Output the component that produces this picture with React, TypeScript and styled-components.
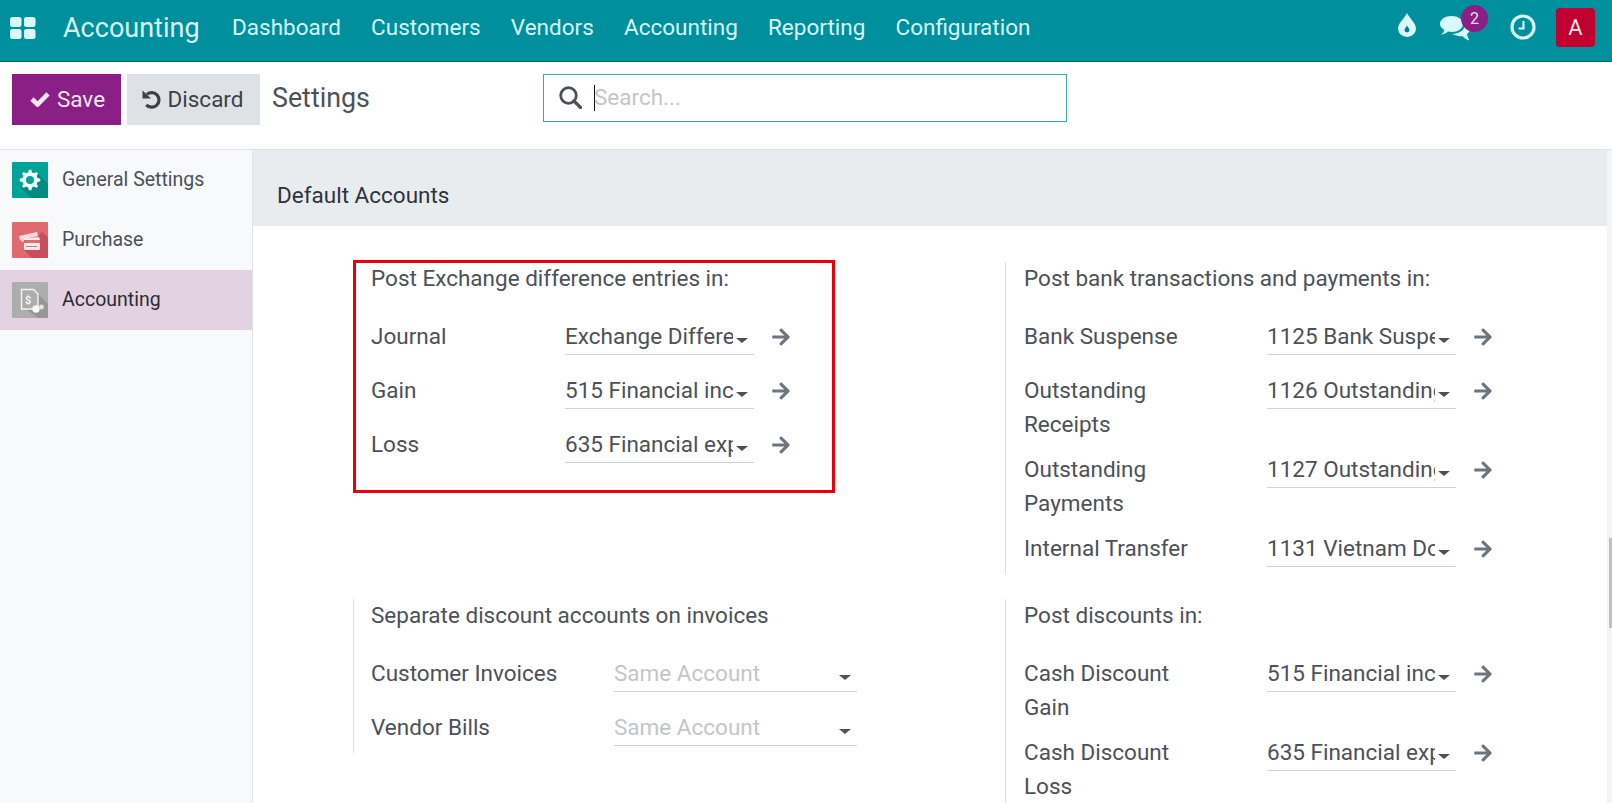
import styled, { createGlobalStyle } from "styled-components";
import { FaArrowRight } from "react-icons/fa";

const GlobalStyle = createGlobalStyle`
  html, body {
    margin: 0;
    height: 100%;
    overflow: hidden;
    background: #fff;
  }
  * {
    box-sizing: border-box;
  }
  body {
    font-family: Roboto, "Liberation Sans", sans-serif;
    color: #4c5159;
  }
`;

const navItems = ["Dashboard", "Customers", "Vendors", "Accounting", "Reporting", "Configuration"];

type T_Field = {
  label: string;
  value: string;
  empty?: boolean;
  link?: boolean;
};

const exchangeFields: T_Field[] = [
  { label: "Journal", value: "Exchange Difference", link: true },
  { label: "Gain", value: "515 Financial income", link: true },
  { label: "Loss", value: "635 Financial expense", link: true },
];

const bankFields: T_Field[] = [
  { label: "Bank Suspense", value: "1125 Bank Suspense", link: true },
  { label: "Outstanding Receipts", value: "1126 Outstanding Receipts", link: true },
  { label: "Outstanding Payments", value: "1127 Outstanding Payments", link: true },
  { label: "Internal Transfer", value: "1131 Vietnam Dong", link: true },
];

const separateFields: T_Field[] = [
  { label: "Customer Invoices", value: "Same Account", empty: true },
  { label: "Vendor Bills", value: "Same Account", empty: true },
];

const discountFields: T_Field[] = [
  { label: "Cash Discount Gain", value: "515 Financial income", link: true },
  { label: "Cash Discount Loss", value: "635 Financial expense", link: true },
];

function AppsIcon() {
  return (
    <svg width="26" height="22" viewBox="0 0 26 22" fill="#d9f8f8">
      <rect x="0" y="0" width="11.5" height="10" rx="2.5" />
      <rect x="14" y="0" width="11.5" height="10" rx="2.5" />
      <rect x="0" y="12" width="11.5" height="10" rx="2.5" />
      <rect x="14" y="12" width="11.5" height="10" rx="2.5" />
    </svg>
  );
}

function DropIcon() {
  return (
    <svg width="18" height="24" viewBox="0 0 18 24">
      <path d="M9 0C10.5 4 18 10 18 15.5A9 8.5 0 0 1 0 15.5C0 10 7.5 4 9 0Z" fill="#d9f8f8" />
      <path d="M9 12.5C9.6 14 11.5 15.5 11.5 17A2.5 2.5 0 0 1 6.5 17C6.5 15.5 8.4 14 9 12.5Z" fill="#00808c" />
    </svg>
  );
}

function ChatIcon() {
  return (
    <svg width="30" height="25" viewBox="0 0 30 25" fill="#d9f8f8">
      <path d="M11.5 0C18 0 23 3.4 23 8C23 12.600 18 16 11.500 16C10.300 16 9 15.900 8 15.600C6.500 17.300 4 18.500 1.500 18.500C3 17 4 15.500 4.200 13.800C1.600 12.400 0 10.300 0 8C0 3.400 5 0 11.500 0Z" />
      <path d="M24.500 6.500C27.800 7.800 30 10.200 30 13C30 15 28.900 16.800 27 18C27.200 19.800 28 21.500 29.500 24.500C26.500 23.500 24 22 22.500 20C21 20.300 19.500 20.300 18 20C15.800 19.600 13.800 18.800 12.500 17.800C19.500 17.800 25 13.600 25 8.200C25 7.600 24.800 7 24.500 6.500Z" />
    </svg>
  );
}

function ClockIcon() {
  return (
    <svg width="26" height="26" viewBox="0 0 26 26" fill="none" stroke="#d9f8f8">
      <circle cx="13" cy="13" r="11" strokeWidth="3.200" />
      <path d="M13.500 7V14.500H8.500" strokeWidth="2.200" />
    </svg>
  );
}

function SearchIcon() {
  return (
    <svg width="23" height="23" viewBox="0 0 23 23" fill="none" stroke="#4c5159">
      <circle cx="9.500" cy="9.500" r="7.800" strokeWidth="2.800" />
      <path d="M15 15L21.500 21.500" strokeWidth="3.200" strokeLinecap="round" />
    </svg>
  );
}

function CheckIcon() {
  return (
    <svg width="20" height="16" viewBox="0 0 20 16" fill="none" stroke="#f4e6f3">
      <path d="M2 8L7.500 13.500L18 2.800" strokeWidth="4.600" />
    </svg>
  );
}

function UndoIcon() {
  return (
    <svg width="19" height="20" viewBox="0 0 19 20">
      <path d="M5 5.300A7.300 7.300 0 1 1 4.300 15.800" fill="none" stroke="#3c4149" strokeWidth="3.200" />
      <path d="M0.500 1.500L9 9.500H0.500Z" fill="#3c4149" />
    </svg>
  );
}

function SettingsAppIcon() {
  return (
    <svg width="36" height="36" viewBox="0 0 36 36">
      <path d="M9 26L24 10L36 22V36H19Z" fill="#018a80" />
      <path
        d="M18 9.500L20.500 9.500L21.200 12.200L23.200 13.100L25.600 11.700L27.300 13.500L25.900 15.900L26.800 17.900L29.500 18.500L29.500 21L26.800 21.700L25.900 23.700L27.300 26L25.600 27.800L23.200 26.400L21.200 27.300L20.500 30L18 30L17.300 27.300L15.300 26.400L12.900 27.800L11.200 26L12.600 23.700L11.700 21.700L9 21L9 18.500L11.700 17.900L12.600 15.900L11.200 13.500L12.900 11.700L15.300 13.100L17.300 12.200Z"
        fill="#f2fbfa"
        transform="translate(-1.200 -1.800)"
      />
      <circle cx="18" cy="18" r="4" fill="#00a398" />
    </svg>
  );
}

function PurchaseAppIcon() {
  return (
    <svg width="36" height="36" viewBox="0 0 36 36">
      <path d="M11 27L30 10L36 15V36H20Z" fill="#c65059" />
      <path d="M7 14L25 10L26 14L8 18Z" fill="#f6dcdc" />
      <path d="M8 17.500L27 14.500L27.500 16.500L10 20Z" fill="#f6dcdc" opacity="0.800" />
      <rect x="12" y="16" width="16" height="12" rx="1.500" fill="#f8e8e8" />
      <rect x="12" y="18" width="16" height="3" fill="#df6a70" />
      <rect x="14" y="24" width="11" height="1" fill="#d86a70" />
    </svg>
  );
}

function AccountingAppIcon() {
  return (
    <svg width="36" height="36" viewBox="0 0 36 36">
      <path d="M22 8L36 22V36H26L15 28Z" fill="#969696" />
      <path d="M9.500 7.500H21.500L26 12V27H9.500Z" fill="#adadad" stroke="#f4f4f4" strokeWidth="1.400" />
      <text x="13" y="22" fontSize="11" fontFamily="Roboto" fontWeight="700" fill="#f4f4f4">$</text>
      <circle cx="24" cy="27" r="3.700" fill="#f8f8f8" />
      <circle cx="29.500" cy="25" r="2.400" fill="#e4e4e4" />
    </svg>
  );
}

function FieldRow({ label, value, empty, link, labelWidth, selectWidth }: T_Field & { labelWidth: number; selectWidth: number }) {
  return (
    <Row>
      <FieldLabel $width={labelWidth}>{label}</FieldLabel>
      <Select $width={selectWidth}>
        <SelectText $empty={empty}>{value}</SelectText>
        <Caret />
      </Select>
      {link && (
        <LinkArrow>
          <FaArrowRight />
        </LinkArrow>
      )}
    </Row>
  );
}

export default function App() {
  return (
    <Page>
      <GlobalStyle />
      <NavBar>
        <AppsButton>
          <AppsIcon />
        </AppsButton>
        <Brand>Accounting</Brand>
        {navItems.map((item) => (
          <NavItem key={item}>{item}</NavItem>
        ))}
        <Systray>
          <DropSlot>
            <DropIcon />
          </DropSlot>
          <ChatSlot>
            <ChatIcon />
            <Badge>2</Badge>
          </ChatSlot>
          <ClockSlot>
            <ClockIcon />
          </ClockSlot>
          <Avatar>A</Avatar>
        </Systray>
      </NavBar>

      <ControlPanel>
        <SaveButton>
          <CheckIcon />
          Save
        </SaveButton>
        <DiscardButton>
          <UndoIcon />
          Discard
        </DiscardButton>
        <PanelTitle>Settings</PanelTitle>
        <SearchBox>
          <SearchIcon />
          <Cursor />
          <SearchHint>Search...</SearchHint>
        </SearchBox>
      </ControlPanel>

      <Body>
        <Sidebar>
          <SideItem>
            <AppTile $color="#00a398">
              <SettingsAppIcon />
            </AppTile>
            <SideLabel>General Settings</SideLabel>
          </SideItem>
          <SideItem>
            <AppTile $color="#df6a70">
              <PurchaseAppIcon />
            </AppTile>
            <SideLabel>Purchase</SideLabel>
          </SideItem>
          <SideItem $active>
            <AppTile $color="#adadad">
              <AccountingAppIcon />
            </AppTile>
            <SideLabel>Accounting</SideLabel>
          </SideItem>
        </Sidebar>

        <Content>
          <SectionHeader>Default Accounts</SectionHeader>
          <SettingsGrid>
            <Block $plain $inset={17}>
              <Highlight />
              <BlockTitle>Post Exchange difference entries in:</BlockTitle>
              <Rows>
                {exchangeFields.map((field) => (
                  <FieldRow key={field.label} {...field} labelWidth={194} selectWidth={189} />
                ))}
              </Rows>
            </Block>
            <Block $inset={18}>
              <BlockTitle>Post bank transactions and payments in:</BlockTitle>
              <Rows>
                {bankFields.map((field) => (
                  <FieldRow key={field.label} {...field} labelWidth={243} selectWidth={189} />
                ))}
              </Rows>
            </Block>
            <Block $inset={17}>
              <BlockTitle>Separate discount accounts on invoices</BlockTitle>
              <Rows>
                {separateFields.map((field) => (
                  <FieldRow key={field.label} {...field} labelWidth={243} selectWidth={243} />
                ))}
              </Rows>
            </Block>
            <Block $inset={18}>
              <BlockTitle>Post discounts in:</BlockTitle>
              <Rows>
                {discountFields.map((field) => (
                  <FieldRow key={field.label} {...field} labelWidth={243} selectWidth={189} />
                ))}
              </Rows>
            </Block>
          </SettingsGrid>
        </Content>

        <ScrollTrack>
          <ScrollThumb />
        </ScrollTrack>
      </Body>
    </Page>
  );
}

const Page = styled.div`
  width: 1612px;
  height: 803px;
  display: flex;
  flex-flow: column nowrap;
  overflow: hidden;
`;

const NavBar = styled.header`
  height: 62px;
  flex: none;
  display: flex;
  align-items: center;
  padding-bottom: 6px;
  background-color: #008f9c;
  border-bottom: 1px solid #00626b;
  color: #d9f8f8;
`;

const AppsButton = styled.div`
  width: 63px;
  padding-left: 10px;
  display: flex;
  align-items: center;
`;

const Brand = styled.div`
  width: 154px;
  font-size: 27px;
`;

const NavItem = styled.div`
  padding: 0 15.1px 2px;
  font-size: 22.5px;
`;

const Systray = styled.div`
  margin-left: auto;
  display: flex;
  align-items: center;
`;

const DropSlot = styled.div`
  margin-right: 24px;
  margin-bottom: 6px;
  display: flex;
`;

const ChatSlot = styled.div`
  position: relative;
  margin-right: 40px;
  margin-top: 2px;
  display: flex;
`;

const Badge = styled.span`
  position: absolute;
  top: -11px;
  left: 21px;
  width: 27px;
  height: 27px;
  border-radius: 50%;
  display: flex;
  align-items: center;
  justify-content: center;
  background-color: #8a1f85;
  color: #ecdcec;
  font-size: 16px;
`;

const ClockSlot = styled.div`
  margin-right: 20px;
  margin-bottom: 2px;
  display: flex;
`;

const Avatar = styled.div`
  width: 39px;
  height: 39px;
  margin-right: 17px;
  border-radius: 4px;
  display: flex;
  align-items: center;
  justify-content: center;
  background-color: #c0002f;
  color: #f6e4e8;
  font-size: 22px;
`;

const ControlPanel = styled.div`
  height: 88px;
  flex: none;
  display: flex;
  align-items: flex-start;
  padding: 12px 0 0 12px;
  background-color: #fff;
  border-bottom: 1px solid #dee2e6;
`;

const SaveButton = styled.button`
  width: 109px;
  height: 51px;
  padding: 0 0 2px 2px;
  display: flex;
  align-items: center;
  justify-content: center;
  gap: 7px;
  border: none;
  background-color: #8a1f85;
  color: #f4e6f3;
  font: 400 22.5px Roboto, sans-serif;
`;

const DiscardButton = styled.button`
  width: 133px;
  height: 51px;
  margin-left: 6px;
  padding: 0 2px 2px 0;
  display: flex;
  align-items: center;
  justify-content: center;
  gap: 7px;
  border: none;
  background-color: #dee2e6;
  color: #3c4149;
  font: 400 22.5px Roboto, sans-serif;
`;

const PanelTitle = styled.div`
  width: 271px;
  height: 48px;
  margin-left: 12px;
  display: flex;
  align-items: center;
  font-size: 26.8px;
  color: #4c5159;
`;

const SearchBox = styled.div`
  width: 524px;
  height: 48px;
  display: flex;
  align-items: center;
  padding: 0 0 1px 15px;
  border: 1px solid #3ea4ae;
  box-shadow: 0 0 1px #b9eef2;
  font-size: 22.5px;
  color: #4c5159;
`;

const Cursor = styled.span`
  width: 1px;
  height: 26px;
  margin-left: 12px;
  background-color: #111;
`;

const SearchHint = styled.span`
  margin: 0 0 2px -1px;
  color: #c2c6cc;
`;

const Body = styled.div`
  flex: 1;
  min-height: 0;
  display: flex;
`;

const Sidebar = styled.aside`
  width: 253px;
  flex: none;
  background-color: #f8f9fa;
  border-right: 1px solid #dee2e6;
`;

const SideItem = styled.div<{ $active?: boolean }>`
  height: 60px;
  display: flex;
  align-items: center;
  gap: 14px;
  padding-left: 12px;
  background-color: ${({ $active }) => ($active ? "#e2d2e2" : "transparent")};
  color: ${({ $active }) => ($active ? "#2f2b35" : "#4c5159")};
`;

const SideLabel = styled.span`
  padding-bottom: 2px;
  font-size: 19.5px;
`;

const AppTile = styled.div<{ $color: string }>`
  width: 36px;
  height: 36px;
  display: flex;
  overflow: hidden;
  border-radius: 1px;
  background-color: ${({ $color }) => $color};
`;

const Content = styled.main`
  flex: 1;
  min-width: 0;
`;

const SectionHeader = styled.div`
  height: 76px;
  padding: 28px 0 0 24px;
  background-color: #e9ecef;
  font-size: 22.5px;
  line-height: 34px;
  color: #2f333a;
`;

const SettingsGrid = styled.div`
  display: grid;
  grid-template-columns: 652px 1fr;
  align-items: start;
  row-gap: 25px;
  padding: 36px 0 0 100px;
`;

const Block = styled.section<{ $plain?: boolean; $inset: number }>`
  position: relative;
  padding-left: ${({ $inset }) => $inset}px;
  border-left: 1px solid ${({ $plain }) => ($plain ? "transparent" : "#dee2e6")};
`;

const Highlight = styled.div`
  position: absolute;
  top: -2px;
  left: -1px;
  width: 482px;
  height: 233px;
  border: 3px solid #e8000f;
`;

const BlockTitle = styled.div`
  margin-top: -1px;
  font-size: 22.5px;
  line-height: 34px;
`;

const Rows = styled.div`
  margin-top: 24px;
  display: flex;
  flex-flow: column nowrap;
  gap: 11px;
`;

const Row = styled.div`
  min-height: 43px;
  display: flex;
  align-items: flex-start;
  font-size: 22.5px;
  line-height: 34px;
`;

const FieldLabel = styled.div<{ $width: number }>`
  width: ${({ $width }) => $width}px;
  padding-right: 55px;
  flex: none;
`;

const Select = styled.div<{ $width: number }>`
  position: relative;
  width: ${({ $width }) => $width}px;
  height: 36px;
  flex: none;
  padding-right: 21px;
  border-bottom: 1px solid #ced4da;
`;

const SelectText = styled.div<{ $empty?: boolean }>`
  overflow: hidden;
  white-space: nowrap;
  color: ${({ $empty }) => ($empty ? "#c2c6cc" : "#4c5159")};
`;

const Caret = styled.span`
  position: absolute;
  right: 6px;
  top: 19px;
  border-top: 5.5px solid #4c5159;
  border-left: 6px solid transparent;
  border-right: 6px solid transparent;
`;

const LinkArrow = styled.div`
  margin-left: 17px;
  padding-top: 8px;
  display: flex;
  font-size: 20px;
  color: #6c757d;
`;

const ScrollTrack = styled.div`
  width: 5px;
  flex: none;
  display: flex;
  flex-flow: column nowrap;
  align-items: flex-end;
  background-color: #f4f4f4;
`;

const ScrollThumb = styled.div`
  width: 3px;
  height: 90px;
  margin-top: 388px;
  background-color: #c1c1c1;
`;
